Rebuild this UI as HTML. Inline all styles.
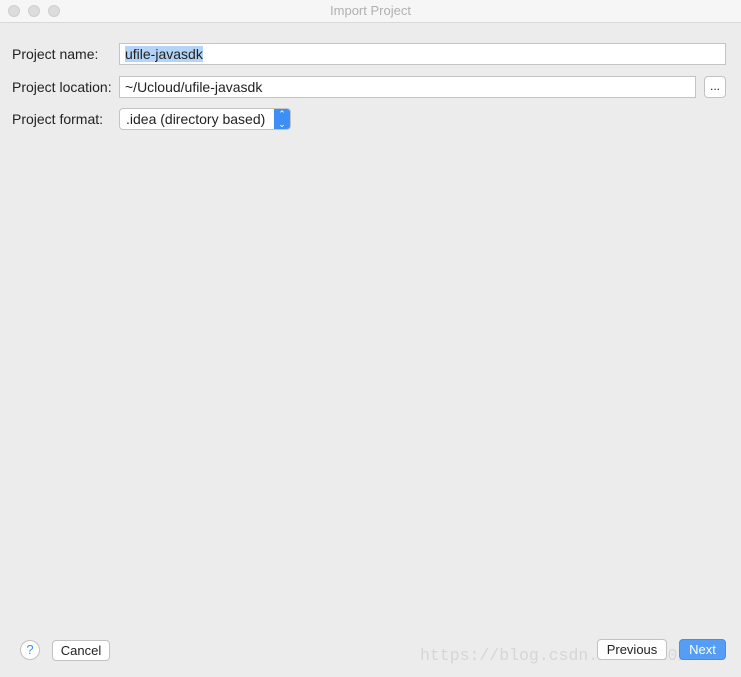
<!DOCTYPE html>
<html><head><style>
body{margin:0;width:741px;height:677px;background:#ececec;font-family:"Liberation Sans",sans-serif;font-size:14px;color:#222;position:relative;overflow:hidden}
.tb{position:absolute;left:0;top:0;width:741px;height:22px;background:#f6f6f6;border-bottom:1px solid #d8d8d8;text-align:center;line-height:22px;color:#b0b0b0;font-size:13px}
.d{position:absolute;top:5px;width:12px;height:12px;border-radius:50%;background:#dcdcdc;border:0.5px solid #cfcfcf;box-sizing:border-box}
.l{position:absolute;left:12px}
.f{position:absolute;background:#fff;border:1px solid #c4c4c4;box-sizing:border-box;height:22px;line-height:20px;padding-left:5px}
.btn{position:absolute;background:#fff;border:1px solid #c2c2c2;border-radius:4px;box-sizing:border-box;text-align:center}
</style></head><body>
<div class="tb">Import Project</div>
<div class="d" style="left:8px"></div><div class="d" style="left:28px"></div><div class="d" style="left:48px"></div>
<div class="l" style="top:46px">Project name:</div>
<div class="f" style="left:119px;top:43px;width:607px"><span style="background:#b3d3f7">ufile-javasdk</span></div>
<div class="l" style="top:79px">Project location:</div>
<div class="f" style="left:119px;top:76px;width:577px">~/Ucloud/ufile-javasdk</div>
<div class="btn" style="left:704px;top:76px;width:22px;height:22px;line-height:18px;font-size:12px">...</div>
<div class="l" style="top:111px">Project format:</div>
<div class="f" style="left:119px;top:108px;width:172px;border-radius:4px;padding-left:6px">.idea (directory based)</div>
<div style="position:absolute;left:274px;top:109px;width:16px;height:20px;background:#3d8ef5;border-radius:0 3px 3px 0;color:#fff;font-size:9px;line-height:10px;text-align:center">⌃<br>⌄</div>
<div style="position:absolute;left:20px;top:640px;width:20px;height:20px;border-radius:50%;background:#fff;border:1px solid #c2c2c2;box-sizing:border-box;text-align:center;line-height:18px;color:#3d8ef5;font-size:13px">?</div>
<div class="btn" style="left:52px;top:640px;width:58px;height:21px;line-height:19px;font-size:13px">Cancel</div>
<div style="position:absolute;left:420px;top:646px;font-family:'Liberation Mono',monospace;font-size:16.5px;color:#d6d6d6">https://blog.csdn.net/wd2014610</div>
<div class="btn" style="left:597px;top:639px;width:70px;height:21px;line-height:19px;font-size:13px;background:rgba(255,255,255,0.92)">Previous</div>
<div class="btn" style="left:679px;top:639px;width:47px;height:21px;line-height:19px;font-size:13px;background:rgba(74,152,245,0.93);border-color:#3d8ef5;color:#fff">Next</div>
</body></html>
